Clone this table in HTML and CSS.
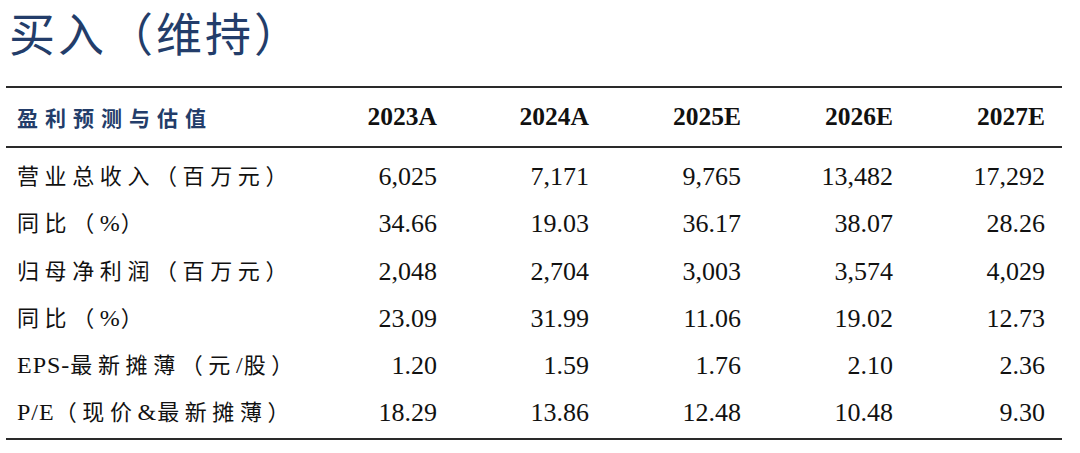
FILE: index.html
```html
<!DOCTYPE html>
<html lang="zh-CN">
<head>
<meta charset="utf-8">
<title>买入（维持）</title>
<link rel="stylesheet" href="styles.css">
</head>
<body>
<div class="page">
  <h1 class="title">买入（维持）</h1>
  <div class="table">
    <div class="row head">
      <div class="label">盈利预测与估值</div>
      <div class="num">2023A</div>
      <div class="num">2024A</div>
      <div class="num">2025E</div>
      <div class="num">2026E</div>
      <div class="num">2027E</div>
    </div>
    <div class="body">
      <div class="row">
        <div class="label">营业总收入（百万元）</div>
        <div class="num">6,025</div>
        <div class="num">7,171</div>
        <div class="num">9,765</div>
        <div class="num">13,482</div>
        <div class="num">17,292</div>
      </div>
      <div class="row">
        <div class="label">同比（<span class="lat">%</span>）</div>
        <div class="num">34.66</div>
        <div class="num">19.03</div>
        <div class="num">36.17</div>
        <div class="num">38.07</div>
        <div class="num">28.26</div>
      </div>
      <div class="row">
        <div class="label">归母净利润（百万元）</div>
        <div class="num">2,048</div>
        <div class="num">2,704</div>
        <div class="num">3,003</div>
        <div class="num">3,574</div>
        <div class="num">4,029</div>
      </div>
      <div class="row">
        <div class="label">同比（<span class="lat">%</span>）</div>
        <div class="num">23.09</div>
        <div class="num">31.99</div>
        <div class="num">11.06</div>
        <div class="num">19.02</div>
        <div class="num">12.73</div>
      </div>
      <div class="row">
        <div class="label"><span class="lat">EPS-</span>最新摊薄（元<span class="lat">/</span>股）</div>
        <div class="num">1.20</div>
        <div class="num">1.59</div>
        <div class="num">1.76</div>
        <div class="num">2.10</div>
        <div class="num">2.36</div>
      </div>
      <div class="row">
        <div class="label"><span class="lat">P/E</span>（现价<span class="lat">&amp;</span>最新摊薄）</div>
        <div class="num">18.29</div>
        <div class="num">13.86</div>
        <div class="num">12.48</div>
        <div class="num">10.48</div>
        <div class="num">9.30</div>
      </div>
    </div>
  </div>
</div>
</body>
</html>
```
FILE: styles.css
```css
html, body {
  margin: 0;
  padding: 0;
  background: #ffffff;
}

.page {
  width: 1080px;
}

.title {
  margin: 0;
  height: 86px;
  padding-left: 9px;
  font-family: "Noto Sans CJK SC", sans-serif;
  font-weight: 400;
  font-size: 46px;
  line-height: 62px;
  letter-spacing: 3px;
  color: #233d6a;
}

.table {
  margin-left: 6px;
  width: 1056px;
  border-top: 2px solid #2a2a2a;
  border-bottom: 2px solid #2a2a2a;
}

.row {
  display: grid;
  grid-template-columns: 279px repeat(5, 152px);
  align-items: center;
}

.head {
  height: 58px;
  border-bottom: 2px solid #2a2a2a;
}

.body {
  padding: 5px 0 1px;
}

.body .row {
  height: 47.3px;
  line-height: 47.3px;
}

.label {
  padding-left: 11px;
  font-family: "Liberation Serif", "Noto Sans CJK SC", serif;
  font-size: 22px;
  letter-spacing: 5.6px;
  color: #111111;
  white-space: nowrap;
}

.head .label {
  font-family: "Noto Sans CJK SC", sans-serif;
  font-weight: 700;
  font-size: 21px;
  letter-spacing: 7px;
  color: #233d6a;
}

.lat {
  font-family: "Liberation Serif", serif;
  font-size: 24px;
  letter-spacing: 1px;
}

.num {
  text-align: right;
  font-family: "Liberation Serif", serif;
  font-size: 26px;
  color: #111111;
}

.head .num {
  font-weight: 700;
  font-size: 25.5px;
}
```
